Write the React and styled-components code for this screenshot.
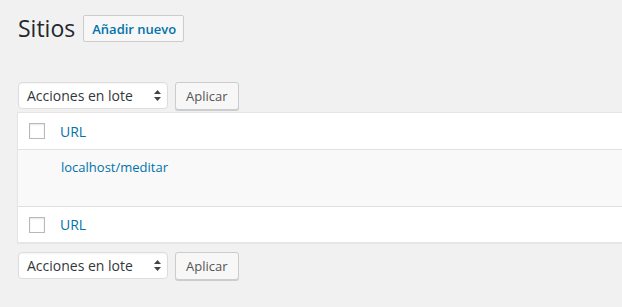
import React from "react";
import styled, { createGlobalStyle } from "styled-components";

const Global = createGlobalStyle`
  html, body { margin: 0; padding: 0; background: #f1f1f1; overflow: hidden; }
  body { font-family: "Open Sans", "Liberation Sans", sans-serif; color: #444; font-size: 13px; }
`;

const Wrap = styled.div`
  padding: 14px 0 0 17px;
  overflow: hidden;
`;

const Header = styled.div`
  display: flex;
  align-items: center;
  padding-left: 1px;
`;

const Title = styled.h1`
  margin: 0;
  font-size: 23px;
  line-height: 29px;
  font-weight: 400;
  color: #23282d;
`;

const TitleAction = styled.a`
  margin-left: 8px;
  height: 27px;
  box-sizing: border-box;
  padding: 0 7px 0 8px;
  display: inline-flex;
  align-items: center;
  font-size: 13px;
  font-weight: 600;
  color: #0073aa;
  background: #f7f7f7;
  border: 1px solid #ccc;
  border-radius: 2px;
  text-decoration: none;
`;

const TableNav = styled.div`
  display: flex;
  align-items: flex-start;
  gap: 7px;
  padding-left: 1px;
  margin-top: ${p => p.$top}px;
  margin-bottom: ${p => p.$bottom}px;
`;

const Select = styled.div`
  width: 150px;
  height: 27px;
  box-sizing: border-box;
  background: #fff;
  border: 1px solid #ddd;
  border-radius: 4px;
  display: flex;
  align-items: center;
  justify-content: space-between;
  padding: 0 6px 0 8px;
  font-size: 14px;
  color: #32373c;
  box-shadow: inset 0 1px 2px rgba(0,0,0,0.04);
`;

const Arrows = styled.svg`
  width: 7px;
  height: 11px;
`;

const Button = styled.div`
  height: 28px;
  box-sizing: border-box;
  padding: 0 10px 1px;
  display: flex;
  align-items: center;
  font-size: 13px;
  color: #555;
  background: #f7f7f7;
  border: 1px solid #ccc;
  border-radius: 3px;
  box-shadow: 0 1px 0 #ccc;
`;

const Table = styled.div`
  margin-right: -2px;
  background: #fff;
  border: 1px solid #e5e5e5;
  box-shadow: 0 1px 1px rgba(0,0,0,0.04);
`;

const HeadRow = styled.div`
  display: flex;
  align-items: center;
  height: ${p => p.$h}px;
  border-bottom: ${p => (p.$bottom ? "1px solid #e1e1e1" : "none")};
  border-top: ${p => (p.$top ? "1px solid #e1e1e1" : "none")};
  padding-left: 11px;
`;

const Check = styled.span`
  width: 16px;
  height: 16px;
  box-sizing: border-box;
  border: 1px solid #b4b9be;
  background: #fff;
  box-shadow: inset 0 1px 2px rgba(0,0,0,0.1);
  margin-right: 15px;
`;

const ColLink = styled.a`
  font-size: 14px;
  color: #0073aa;
  text-decoration: none;
`;

const Row = styled.div`
  height: 56px;
  background: #f9f9f9;
  padding: 8px 0 0 43px;
  box-sizing: border-box;
`;

const RowLink = styled.a`
  font-size: 13px;
  line-height: 19px;
  color: #0073aa;
  text-decoration: none;
`;

function Nav({ top, bottom }) {
  return (
    <TableNav $top={top} $bottom={bottom}>
      <Select>
        <span>Acciones en lote</span>
        <Arrows viewBox="0 0 7 11">
          <path d="M3.5 0 L7 4 L0 4 Z M0 7 L7 7 L3.5 11 Z" fill="#444" />
        </Arrows>
      </Select>
      <Button>Aplicar</Button>
    </TableNav>
  );
}

export default function App() {
  return (
    <>
      <Global />
      <Wrap>
        <Header>
          <Title>Sitios</Title>
          <TitleAction>Añadir nuevo</TitleAction>
        </Header>
        <Nav top={39} bottom={2} />
        <Table>
          <HeadRow $h={36} $bottom>
            <Check />
            <ColLink>URL</ColLink>
          </HeadRow>
          <Row>
            <RowLink>localhost/meditar</RowLink>
          </Row>
          <HeadRow $h={35} $top>
            <Check />
            <ColLink>URL</ColLink>
          </HeadRow>
        </Table>
        <Nav top={9} bottom={2} />
      </Wrap>
    </>
  );
}
